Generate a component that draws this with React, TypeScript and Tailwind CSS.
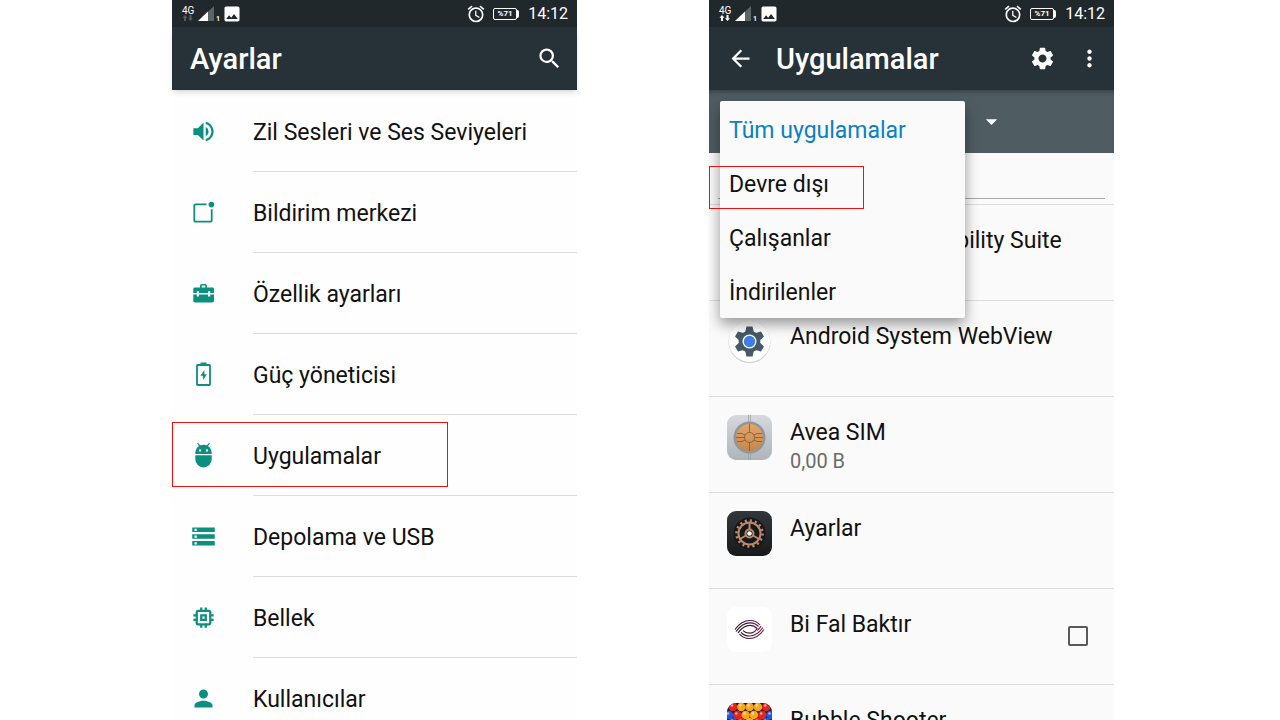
import { useState } from "react";
import type { ReactNode } from "react";
import {
    MdAccessAlarm,
    MdArrowBack,
    MdArrowDropDown,
    MdImage,
    MdMemory,
    MdMoreVert,
    MdPerson,
    MdSearch,
    MdSettings,
    MdStorage,
    MdVolumeUp,
} from "react-icons/md";

const NotificationIcon = () => (
    <svg viewBox="0 0 27 27" className="size-[27px]" fill="none" stroke="currentColor" strokeWidth="1.8">
        <path d="M16.500 5.300H5.600a1.300 1.300 0 0 0-1.300 1.300v14.800a1.300 1.300 0 0 0 1.300 1.300h14.800a1.300 1.300 0 0 0 1.300-1.300V10.200" />
        <circle cx="21.400" cy="5.600" r="2.800" fill="currentColor" stroke="none" />
    </svg>
);

const ToolboxIcon = () => (
    <svg viewBox="0 0 27 27" className="size-[27px]" fill="currentColor">
        <path
            fillRule="evenodd"
            d="M10 7.500V6c0-1.300.8-2.100 2.100-2.100h2.800c1.300 0 2.100.8 2.100 2.100v1.500h5.300c1 0 1.700.7 1.700 1.700v3.900h-3.800v-1.800h-2.200v1.800H9v-1.800H6.800v1.800H3.300V9.200c0-1 .7-1.700 1.700-1.700zm1.700 0h3.600V6.200c0-.4-.2-.6-.6-.6h-2.400c-.4 0-.6.2-.6.6z"
        />
        <path d="M3.300 14.500h3.500v2H9v-2h9v2h2.200v-2H24v6.200c0 1-.7 1.700-1.700 1.700H5c-1 0-1.700-.7-1.700-1.700z" />
    </svg>
);

const BatteryIcon = () => (
    <svg viewBox="0 0 27 27" className="size-[27px]" fill="none">
        <path d="M10.500 2.500h6" stroke="currentColor" strokeWidth="2" />
        <rect x="7" y="4" width="13" height="20" rx="0.800" stroke="currentColor" strokeWidth="1.800" />
        <path d="M14.400 9l-4 5.700h2.700v4.300l3.800-5.700h-2.500z" fill="currentColor" />
    </svg>
);

const DroidIcon = () => (
    <svg viewBox="0 0 27 27" className="size-[27px]" fill="currentColor">
        <path d="M7.500 1.200l2.700 3.300M19.500 1.200l-2.700 3.300" stroke="currentColor" strokeWidth="1.200" />
        <path
            fillRule="evenodd"
            d="M5.300 12V10.500a8.200 7.700 0 0 1 16.400 0V12zM8.800 8.400a1.200 1.200 0 1 0 2.400 0a1.200 1.200 0 1 0-2.400 0zM15.800 8.400a1.200 1.200 0 1 0 2.400 0a1.200 1.200 0 1 0-2.400 0z"
        />
        <path d="M5.300 13.300h16.400v4a8.200 8.200 0 0 1-16.400 0z" />
    </svg>
);

const SignalIcon = () => (
    <svg viewBox="0 0 16 15" className="h-[15px] w-4">
        <path d="M16 0v15H0z" fill="#5d6467" />
        <path d="M10 5.600V15H0z" fill="#fff" />
    </svg>
);

const WebViewIcon = () => (
    <svg viewBox="0 0 45 45" className="size-[45px]">
        <circle cx="22.500" cy="23" r="21" fill="#cfcfcf" />
        <circle cx="22.500" cy="22.300" r="20.600" fill="#fff" />
        <g fill="#455a64">
            <circle cx="22.500" cy="22.500" r="10.800" />
            {[0, 60, 120, 180, 240, 300].map((angle) => (
                <path key={angle} d="M19.500 7.500h6l1.500 6.500h-9z" transform={`rotate(${angle} 22.500 22.500)`} />
            ))}
        </g>
        <circle cx="22.500" cy="22.500" r="7" fill="#fff" />
        <circle cx="22.500" cy="22.500" r="5.700" fill="#3f7de8" />
    </svg>
);

const SimIcon = () => (
    <svg viewBox="0 0 45 45" className="size-[45px]">
        <defs>
            <linearGradient id="simPlate" x1="0" y1="0" x2="0" y2="1">
                <stop offset="0" stopColor="#d5d9dc" />
                <stop offset="1" stopColor="#aeb4b9" />
            </linearGradient>
            <linearGradient id="simCopper" x1="0" y1="0" x2="0" y2="1">
                <stop offset="0" stopColor="#e2a76c" />
                <stop offset="1" stopColor="#c5864a" />
            </linearGradient>
        </defs>
        <rect width="45" height="45" rx="9" fill="url(#simPlate)" />
        <path d="M21.500 0v45M23.500 0v45" stroke="#9da4aa" strokeWidth="0.800" />
        <circle cx="22.500" cy="22.500" r="16" fill="#8e959b" />
        <circle cx="22.500" cy="22.500" r="13.500" fill="url(#simCopper)" />
        <g fill="none" stroke="#80552f" strokeWidth="0.800">
            <circle cx="22.500" cy="22.500" r="5" />
            <path d="M22.500 9v8.500M22.500 27.500V36M18 20l-3-1.500h-5M17.500 22.500H9M18 25l-3 1.500h-5M27 20l3-1.500h5M27.500 22.500H36M27 25l3 1.500h5" />
        </g>
    </svg>
);

const GearsIcon = () => (
    <svg viewBox="0 0 45 45" className="size-[45px]">
        <defs>
            <linearGradient id="gearPlate" x1="0" y1="0" x2="0" y2="1">
                <stop offset="0" stopColor="#34373a" />
                <stop offset="1" stopColor="#17191b" />
            </linearGradient>
        </defs>
        <rect width="45" height="45" rx="9" fill="url(#gearPlate)" />
        <circle cx="22.500" cy="22.500" r="16" fill="#17181a" />
        <g fill="none" stroke="#b98b6c">
            <circle cx="22.500" cy="22.500" r="11" strokeWidth="2" />
            <circle cx="22.500" cy="22.500" r="13" strokeWidth="2.600" strokeDasharray="2.100 3" />
            <circle cx="22.500" cy="22.500" r="4" strokeWidth="2" />
            <path d="M22.500 11v8M13 28l6-3.500M32 28l-6-3.500" strokeWidth="2" />
        </g>
        <circle cx="22.500" cy="22.500" r="2.300" fill="#fff" />
    </svg>
);

const EyeIcon = () => (
    <svg viewBox="0 0 45 45" className="size-[45px]">
        <defs>
            <linearGradient id="eyeInk" x1="8" y1="0" x2="37" y2="0" gradientUnits="userSpaceOnUse">
                <stop offset="0" stopColor="#1d1420" />
                <stop offset="1" stopColor="#7d1f55" />
            </linearGradient>
        </defs>
        <rect width="45" height="45" rx="9" fill="#fff" />
        <g fill="none" stroke="url(#eyeInk)" strokeWidth="1.200">
            <path d="M8 22.500c5-7 10.500-9 15-9s8 2 10 4.500" />
            <path d="M9 24.500c5-7 9.500-8.700 14-8.700 4 0 6.500 1.400 8.500 3.700" />
            <path d="M11 25.800c4-5.500 8-7.500 12-7.500 3.300 0 5.300 1.200 7 3.200-1.500 2.800-4 4.700-7.500 4.700-2.800 0-5-1-6.500-2.500" />
            <path d="M37 22.500c-5 7-10 9-14.500 9s-8-2-10-4.500" />
            <path d="M36 20.500c-5 7-9 8.500-13.500 8.500-4 0-6.500-1.400-8.500-3.700" />
            <path d="M34 19.200c-1 1.700-2.300 3-3.700 4.200" />
        </g>
    </svg>
);

const bubbleRows = [
    { y: 4, x: 6, colors: ["#e3261b", "#f7a71a", "#f7a71a", "#f7a71a", "#e3261b"] },
    { y: 12, x: 2, colors: ["#2456d6", "#e3261b", "#f7a71a", "#f7a71a", "#e3261b", "#2456d6"] },
    { y: 19, x: 6, colors: ["#2456d6", "#e3261b", "#f7a71a", "#e3261b", "#2456d6"] },
    { y: 27, x: 2, colors: ["#2456d6", "#2456d6", "#e3261b", "#e3261b", "#2456d6", "#2456d6"] },
];

const BubblesIcon = () => (
    <svg viewBox="0 0 45 45" className="size-[45px]">
        <clipPath id="bubbleClip">
            <rect width="45" height="45" rx="9" />
        </clipPath>
        <g clipPath="url(#bubbleClip)">
            <rect width="45" height="45" fill="#26163f" />
            {bubbleRows.map((row) =>
                row.colors.map((color, index) => (
                    <g key={`${row.y}-${index}`}>
                        <circle cx={row.x + index * 8.3} cy={row.y} r="4.300" fill={color} />
                        <circle cx={row.x + index * 8.3 - 1} cy={row.y - 1.5} r="1.300" fill="#fff" opacity="0.600" />
                    </g>
                ))
            )}
        </g>
    </svg>
);

const StatusBar = ({ dataActive }: { dataActive: boolean }) => (
    <div className="flex h-[27px] items-center justify-between bg-[#21282c] pr-[9px] pl-2.5 text-white">
        <div className="flex items-center">
            <div className="flex w-4 flex-col items-start">
                <span className="text-[10px] leading-[9px]">4G</span>
                <svg
                    viewBox="0 0 12 6"
                    className={`h-1.5 w-3 ${dataActive ? "text-white" : "text-[#565d60]"}`}
                    fill="currentColor"
                >
                    <path d="M3 0l2.500 2.800H4V6H2V2.800H.5zM8.500 6L6 3.200h1.500V0h2v3.200H11z" />
                </svg>
            </div>
            <SignalIcon />
            <span className="w-2 self-end pb-0.5 pl-0.5 text-[7px] leading-[6px] font-bold">1</span>
            <MdImage size={20} />
        </div>
        <div className="flex items-center">
            <MdAccessAlarm size={20} />
            <div className="ml-[7px] flex items-center">
                <div className="flex h-3 w-6 items-center justify-center rounded-xs border border-white text-[8px] font-bold">
                    %71
                </div>
                <div className="h-2 w-0.5 rounded-r-sm bg-white" />
            </div>
            <span className="ml-[9px] pt-px text-base">14:12</span>
        </div>
    </div>
);

const settings: { label: string; icon: ReactNode; marked?: boolean }[] = [
    { label: "Zil Sesleri ve Ses Seviyeleri", icon: <MdVolumeUp size={27} /> },
    { label: "Bildirim merkezi", icon: <NotificationIcon /> },
    { label: "Özellik ayarları", icon: <ToolboxIcon /> },
    { label: "Güç yöneticisi", icon: <BatteryIcon /> },
    { label: "Uygulamalar", icon: <DroidIcon />, marked: true },
    { label: "Depolama ve USB", icon: <MdStorage size={27} /> },
    { label: "Bellek", icon: <MdMemory size={27} /> },
    { label: "Kullanıcılar", icon: <MdPerson size={27} /> },
];

const SettingsScreen = () => (
    <section className="flex-1 bg-[#fefefe]">
        <StatusBar dataActive={false} />
        <header className="flex h-[63px] items-center justify-between bg-[#263238] pr-3.5 pl-[18px] text-white shadow-md">
            <h1 className="pt-[3px] text-[29px] font-medium">Ayarlar</h1>
            <button aria-label="Ara">
                <MdSearch size={27} />
            </button>
        </header>
        <ul className="pt-px">
            {settings.map((item) => (
                <li key={item.label} className="relative">
                    <button className="flex w-full items-center pl-[18px] text-left text-[23px]">
                        <span className="w-[63px] text-[#0b8f7f]">{item.icon}</span>
                        <span className="flex h-[81px] flex-1 items-center border-b border-[#dcdcdc] pt-1">
                            {item.label}
                        </span>
                    </button>
                    {item.marked && (
                        <div className="pointer-events-none absolute top-[7px] left-0 h-[65px] w-[276px] border border-[#f01010]" />
                    )}
                </li>
            ))}
        </ul>
    </section>
);

const apps: { name: string; icon: ReactNode; size?: string; selectable?: boolean }[] = [
    { name: "Android Accessibility Suite", icon: null },
    { name: "Android System WebView", icon: <WebViewIcon /> },
    { name: "Avea SIM", icon: <SimIcon />, size: "0,00 B" },
    { name: "Ayarlar", icon: <GearsIcon /> },
    { name: "Bi Fal Baktır", icon: <EyeIcon />, selectable: true },
    { name: "Bubble Shooter", icon: <BubblesIcon /> },
];

const filters = ["Tüm uygulamalar", "Devre dışı", "Çalışanlar", "İndirilenler"];

const FilterMenu = () => {
    const [selected, setSelected] = useState<string>(filters[0]);
    return (
        <div className="absolute top-[11px] left-[11px] w-[245px] rounded-xs bg-[#fafafa] pt-px shadow-[0_6px_14px_rgba(0,0,0,0.4)]">
            {filters.map((filter) => (
                <button
                    key={filter}
                    onClick={() => setSelected(filter)}
                    className={`block h-[54px] w-full px-[9px] pt-1 text-left text-[23px] ${
                        filter === selected ? "text-[#0a80c4]" : "text-[#111111]"
                    }`}
                >
                    {filter}
                </button>
            ))}
            <div className="pointer-events-none absolute top-[65px] -left-[11px] h-[43px] w-[155px] border border-[#f01010]" />
        </div>
    );
};

const AppsScreen = () => (
    <section className="flex-1 bg-[#fafafa]">
        <StatusBar dataActive={true} />
        <header className="flex h-[63px] items-center bg-[#263238] pr-[11px] pl-[18px] text-white">
            <button aria-label="Geri">
                <MdArrowBack size={27} />
            </button>
            <h1 className="flex-1 pt-[3px] pl-[22px] text-[29px] font-medium">Uygulamalar</h1>
            <button aria-label="Ayarlar">
                <MdSettings size={27} />
            </button>
            <button aria-label="Diğer seçenekler" className="ml-5">
                <MdMoreVert size={27} />
            </button>
        </header>
        <div className="relative">
            <div className="flex h-[63px] items-center justify-end bg-[#4f5d62] pr-[109px] text-white shadow-[inset_0_4px_4px_-2px_rgba(0,0,0,0.3)]">
                <button aria-label="Filtre">
                    <MdArrowDropDown size={27} />
                </button>
            </div>
            <div className="h-[52px] border-b border-[#dcdcdc] px-[9px]">
                <input
                    type="text"
                    aria-label="Uygulama ara"
                    className="block h-[46px] w-full border-b border-[#a8a8a8] bg-transparent text-[23px] outline-none"
                />
            </div>
            <ul>
                {apps.map((app) => (
                    <li key={app.name} className="flex h-24 border-b border-[#dcdcdc] pr-[26px] pl-[18px]">
                        <div className="w-[63px] pt-[18px]">{app.icon}</div>
                        <div className="flex-1 pt-[21px]">
                            <label htmlFor={app.name} className="block text-[23px] leading-[30px]">
                                {app.name}
                            </label>
                            {app.size && <p className="text-[20px] leading-[26px] text-[#6b6b6b]">{app.size}</p>}
                        </div>
                        {app.selectable && (
                            <input
                                id={app.name}
                                type="checkbox"
                                className="mt-[37px] size-5 appearance-none rounded-xs border-2 border-[#5a5a5a] checked:bg-[#0b8f7f]"
                            />
                        )}
                    </li>
                ))}
            </ul>
            <FilterMenu />
        </div>
    </section>
);

export default function App() {
    return (
        <main className="flex h-screen gap-[132px] overflow-hidden bg-white pr-[166px] pl-[172px] font-['Roboto',sans-serif] text-[#111111]">
            <SettingsScreen />
            <AppsScreen />
        </main>
    );
}
